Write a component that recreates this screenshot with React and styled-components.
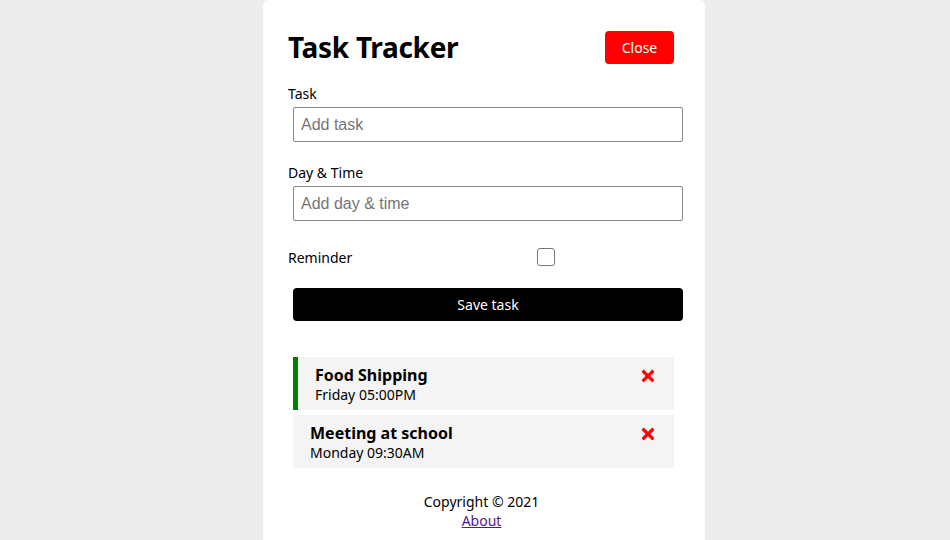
import React from "react";
import styled, { createGlobalStyle } from "styled-components";
import { FaTimes } from "react-icons/fa";

const tasks = [
  { id: 1, text: "Food Shipping", day: "Friday 05:00PM", reminder: true },
  { id: 2, text: "Meeting at school", day: "Monday 09:30AM", reminder: false },
];

function App() {
  return (
    <>
      <GlobalStyle />
      <Container>
        <Header>
          <Title>Task Tracker</Title>
          <HeaderButton>Close</HeaderButton>
        </Header>
        <Form>
          <FormControl>
            <Label>Task</Label>
            <TextInput type="text" placeholder="Add task" />
          </FormControl>
          <FormControl>
            <Label>Day &amp; Time</Label>
            <TextInput type="text" placeholder="Add day & time" />
          </FormControl>
          <CheckControl>
            <CheckLabel>Reminder</CheckLabel>
            <CheckWrap>
              <CheckBox type="checkbox" />
            </CheckWrap>
          </CheckControl>
          <SaveButton type="button">Save task</SaveButton>
        </Form>
        <TaskList>
          {tasks.map((task) => (
            <TaskItem key={task.id} $reminder={task.reminder}>
              <TaskTitle>
                {task.text}
                <FaTimes size={18} color="red" />
              </TaskTitle>
              <TaskDay>{task.day}</TaskDay>
            </TaskItem>
          ))}
        </TaskList>
        <Footer>
          <Copyright>Copyright &copy; 2021</Copyright>
          <FooterLink href="#about">About</FooterLink>
        </Footer>
      </Container>
    </>
  );
}

export default App;

const GlobalStyle = createGlobalStyle`
  * {
    box-sizing: border-box;
  }
  html, body {
    height: 540px;
    overflow: hidden;
  }
  body {
    margin: 0;
    padding-left: 18px;
    background: #ededed;
    font-family: "Noto Sans", "Open Sans", sans-serif;
    color: #000;
  }
`;

const Container = styled.div`
  width: 442px;
  height: 540px;
  margin: 0 auto;
  padding: 31px 30px 0 25px;
  background: #fff;
  border-radius: 5px 5px 0 0;
`;

const Header = styled.header`
  display: flex;
  justify-content: space-between;
  align-items: center;
  margin-bottom: 20px;
`;

const Title = styled.h1`
  margin: 0;
  font-size: 28px;
  line-height: 33px;
  font-weight: 700;
  letter-spacing: -0.3px;
`;

const HeaderButton = styled.button`
  width: 69px;
  height: 33px;
  margin-right: 1px;
  border: none;
  border-radius: 4px;
  background: red;
  color: #fff;
  font-family: inherit;
  font-size: 14px;
  cursor: pointer;
`;

const Form = styled.form`
  display: flex;
  flex-direction: column;
`;

const FormControl = styled.div`
  display: flex;
  flex-direction: column;
  margin-bottom: 21px;
`;

const Label = styled.label`
  font-size: 14px;
  line-height: 20px;
`;

const TextInput = styled.input`
  width: 390px;
  height: 35px;
  margin: 3px 0 0 5px;
  padding: 3px 7px;
  border: 1px solid #8a8a8a;
  border-radius: 2px;
  font-family: "Liberation Sans", Arial, sans-serif;
  font-size: 16px;
  &::placeholder {
    color: #757575;
  }
`;

const CheckControl = styled.div`
  display: flex;
  align-items: center;
  height: 20px;
  margin: 5px 0 21px;
`;

const CheckLabel = styled.label`
  flex: 1;
  font-size: 14px;
`;

const CheckWrap = styled.div`
  flex: 2;
  display: flex;
  justify-content: center;
`;

const CheckBox = styled.input`
  appearance: none;
  width: 18px;
  height: 18px;
  margin: 0;
  border: 1px solid #767676;
  border-radius: 3px;
  background: #fff;
`;

const SaveButton = styled.button`
  width: 390px;
  height: 33px;
  margin-left: 5px;
  border: none;
  border-radius: 4px;
  background: #000;
  color: #fff;
  font-family: inherit;
  font-size: 14px;
  cursor: pointer;
`;

const TaskList = styled.div`
  margin-top: 36px;
`;

const TaskItem = styled.div`
  width: 381px;
  margin: 0 0 5px 5px;
  padding: 8px 17px 7px;
  background: #f4f4f4;
  border-left: ${(p) => (p.$reminder ? "5px solid green" : "none")};
`;

const TaskTitle = styled.h3`
  display: flex;
  justify-content: space-between;
  align-items: center;
  margin: 0;
  font-size: 16px;
  line-height: 21px;
  font-weight: 700;
`;

const TaskDay = styled.p`
  margin: 0;
  font-size: 14px;
  line-height: 17px;
`;

const Footer = styled.footer`
  display: flex;
  flex-direction: column;
  align-items: center;
  margin-top: 26px;
  font-size: 14px;
`;

const Copyright = styled.p`
  margin: 0;
  line-height: 16px;
`;

const FooterLink = styled.a`
  margin-top: 3px;
  line-height: 16px;
  color: #551a8b;
`;
